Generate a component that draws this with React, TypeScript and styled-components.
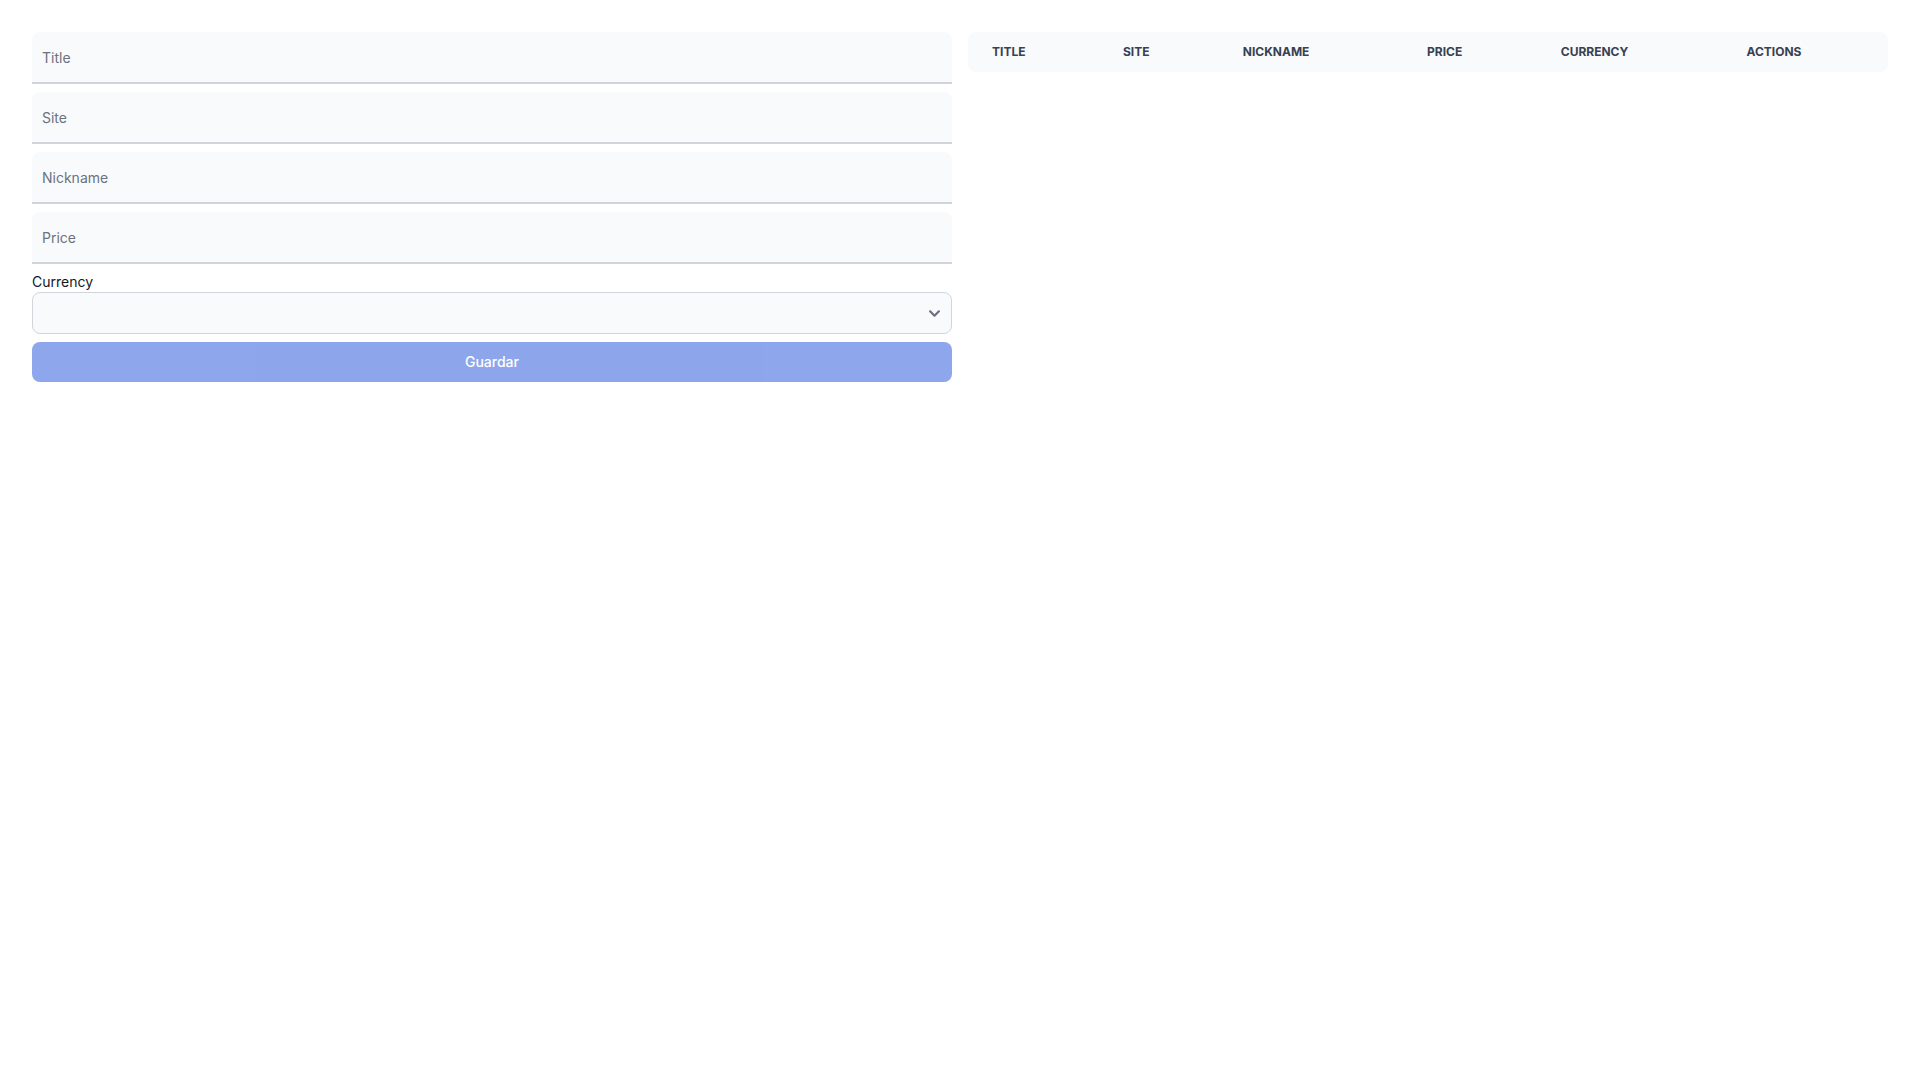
import React from 'react';
import styled, { createGlobalStyle } from 'styled-components';

const GlobalStyle = createGlobalStyle`
    *, *::before, *::after {
        box-sizing: border-box;
    }

    body {
        margin: 0;
        background: #ffffff;
        font-family: Inter, 'Liberation Sans', sans-serif;
        color: #111827;
    }
`;

const Page = styled.div`
    display: grid;
    grid-template-columns: 1fr 1fr;
    gap: 16px;
    padding: 32px;
    align-items: start;
`;

const Form = styled.form`
    display: flex;
    flex-direction: column;
    gap: 8px;
`;

const Field = styled.div`
    position: relative;
`;

const Input = styled.input`
    display: block;
    width: 100%;
    padding: 20px 10px 10px;
    font-family: inherit;
    font-size: 14px;
    line-height: 20px;
    color: #111827;
    background: #f9fafb;
    border: 0;
    border-bottom: 2px solid #d1d5db;
    border-radius: 8px 8px 0 0;
    outline: none;
    appearance: none;
`;

const FloatLabel = styled.label`
    position: absolute;
    top: 16px;
    left: 10px;
    font-size: 14px;
    line-height: 20px;
    color: #6b7280;
    pointer-events: none;
`;

const SelectGroup = styled.div`
    display: flex;
    flex-direction: column;
`;

const Label = styled.label`
    font-size: 14px;
    line-height: 20px;
    color: #111827;
`;

const Select = styled.select`
    display: block;
    width: 100%;
    height: 42px;
    padding: 10px 40px 10px 10px;
    font-family: inherit;
    font-size: 14px;
    line-height: 20px;
    color: #111827;
    background-color: #f9fafb;
    background-image: url("data:image/svg+xml,%3csvg xmlns='http://www.w3.org/2000/svg' fill='none' viewBox='0 0 10 6'%3e%3cpath stroke='%236b7280' stroke-linecap='round' stroke-linejoin='round' stroke-width='2' d='m1 1 4 4 4-4'/%3e%3c/svg%3e");
    background-position: right 12px center;
    background-repeat: no-repeat;
    background-size: 10.5px 10.5px;
    border: 1px solid #d1d5db;
    border-radius: 8px;
    appearance: none;
    outline: none;
`;

const SubmitButton = styled.button`
    width: 100%;
    height: 40px;
    padding: 10px 20px;
    font-family: inherit;
    font-size: 14px;
    line-height: 20px;
    font-weight: 500;
    color: #ffffff;
    background: #1d4ed8;
    border: 0;
    border-radius: 8px;
    opacity: 0.5;
    cursor: not-allowed;
`;

const TableWrap = styled.div`
    border-radius: 8px;
    overflow: hidden;
`;

const Table = styled.table`
    width: 100%;
    border-collapse: collapse;
    text-align: left;
    font-size: 14px;
    color: #6b7280;
`;

const Head = styled.thead`
    background: #f9fafb;
    font-size: 12px;
    line-height: 16px;
    text-transform: uppercase;
    color: #374151;
`;

const Th = styled.th`
    padding: 12px 24px;
    font-weight: 700;
`;

const fields = ['Title', 'Site', 'Nickname', 'Price'];
const columns = ['Title', 'Site', 'Nickname', 'Price', 'Currency', 'Actions'];

const App = () => (
    <>
        <GlobalStyle />
        <Page>
            <Form onSubmit={(e) => e.preventDefault()}>
                {fields.map((name) => (
                    <Field key={name}>
                        <Input id={name.toLowerCase()} type='text' placeholder=' ' />
                        <FloatLabel htmlFor={name.toLowerCase()}>{name}</FloatLabel>
                    </Field>
                ))}
                <SelectGroup>
                    <Label htmlFor='currency'>Currency</Label>
                    <Select id='currency' defaultValue=''>
                        <option value='' />
                    </Select>
                </SelectGroup>
                <SubmitButton type='submit' disabled>
                    Guardar
                </SubmitButton>
            </Form>

            <TableWrap>
                <Table>
                    <Head>
                        <tr>
                            {columns.map((col) => (
                                <Th key={col} scope='col'>
                                    {col}
                                </Th>
                            ))}
                        </tr>
                    </Head>
                    <tbody />
                </Table>
            </TableWrap>
        </Page>
    </>
);

export default App;
